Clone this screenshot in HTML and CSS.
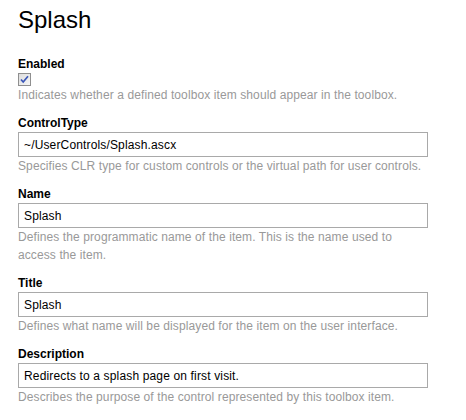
FILE: index.html
```html
<!DOCTYPE html>
<html lang="en">
<head>
  <meta charset="UTF-8">
  <title>Splash</title>
  <link rel="stylesheet" href="styles.css">
</head>
<body>
  <div class="editor">
    <h1>Splash</h1>

    <div class="field">
      <label class="field-label">Enabled</label>
      <span class="check">
        <svg width="13" height="13" viewBox="0 0 13 13">
          <defs>
            <linearGradient id="cb" x1="0" y1="0" x2="1" y2="1">
              <stop offset="0" stop-color="#dcdcdc"/>
              <stop offset="1" stop-color="#f7f7f7"/>
            </linearGradient>
          </defs>
          <rect x="0.5" y="0.5" width="12" height="12" fill="url(#cb)" stroke="#8f8f8f"/>
          <path d="M3 6.5 L5.2 9 L10 3.2" fill="none" stroke="#3a56b8" stroke-width="1.7"/>
        </svg>
      </span>
      <div class="field-help">Indicates whether a defined toolbox item should appear in the toolbox.</div>
    </div>

    <div class="field">
      <label class="field-label">ControlType</label>
      <input class="field-input" type="text" value="~/UserControls/Splash.ascx">
      <div class="field-help">Specifies CLR type for custom controls or the virtual path for user controls.</div>
    </div>

    <div class="field">
      <label class="field-label">Name</label>
      <input class="field-input" type="text" value="Splash">
      <div class="field-help">Defines the programmatic name of the item. This is the name used to access the item.</div>
    </div>

    <div class="field">
      <label class="field-label">Title</label>
      <input class="field-input" type="text" value="Splash">
      <div class="field-help">Defines what name will be displayed for the item on the user interface.</div>
    </div>

    <div class="field">
      <label class="field-label">Description</label>
      <input class="field-input" type="text" value="Redirects to a splash page on first visit.">
      <div class="field-help">Describes the purpose of the control represented by this toolbox item.</div>
    </div>
  </div>
</body>
</html>
```

FILE: styles.css
```css
body {
  margin: 0;
  padding: 0;
  background: #fff;
  font-family: "Liberation Sans", Arial, sans-serif;
  color: #000;
}
.editor {
  padding: 6px 18px 0 18px;
  width: 410px;
}
h1 {
  font-size: 24px;
  font-weight: normal;
  line-height: 28px;
  margin: 0 0 21px 0;
}
.field {
  margin-bottom: 10px;
}
.field-label {
  display: block;
  font-size: 12px;
  font-weight: bold;
  line-height: 18px;
}
.check {
  display: block;
  height: 13px;
}
.check svg {
  display: block;
}
.field-input {
  display: block;
  box-sizing: border-box;
  width: 410px;
  height: 25px;
  margin: 0;
  padding: 0 5px;
  border: 1px solid #a9a9a9;
  font-family: "Liberation Sans", Arial, sans-serif;
  font-size: 12px;
  letter-spacing: 0.15px;
  color: #000;
  outline: none;
}
.field-help {
  font-size: 12px;
  line-height: 18px;
  letter-spacing: 0.1px;
  color: #999;
}
```
